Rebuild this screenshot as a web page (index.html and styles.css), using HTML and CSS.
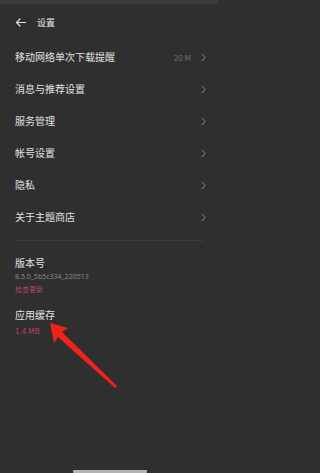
FILE: index.html
```html
<!DOCTYPE html>
<html lang="zh">
<head>
<meta charset="utf-8">
<link rel="stylesheet" href="styles.css">
</head>
<body>
<div class="screen">
  <div class="topstrip"></div>
  <header class="header">
    <svg class="back" width="11" height="9" viewBox="0 0 11 9"><path d="M5 1 L1.5 4.5 L5 8 M1.5 4.5 H10.5" fill="none" stroke="#e0e0e0" stroke-width="1.2" stroke-linecap="round" stroke-linejoin="round"/></svg>
    <span class="title">设置</span>
  </header>
  <ul class="list">
    <li class="row"><span class="label">移动网络单次下载提醒</span><span class="value">20 M</span><svg class="chev" width="5" height="9" viewBox="0 0 5 9"><path d="M0.8 0.8 L4.2 4.5 L0.8 8.2" fill="none" stroke="#8a8a8a" stroke-width="1"/></svg></li>
    <li class="row"><span class="label">消息与推荐设置</span><svg class="chev" width="5" height="9" viewBox="0 0 5 9"><path d="M0.8 0.8 L4.2 4.5 L0.8 8.2" fill="none" stroke="#8a8a8a" stroke-width="1"/></svg></li>
    <li class="row"><span class="label">服务管理</span><svg class="chev" width="5" height="9" viewBox="0 0 5 9"><path d="M0.8 0.8 L4.2 4.5 L0.8 8.2" fill="none" stroke="#8a8a8a" stroke-width="1"/></svg></li>
    <li class="row"><span class="label">帐号设置</span><svg class="chev" width="5" height="9" viewBox="0 0 5 9"><path d="M0.8 0.8 L4.2 4.5 L0.8 8.2" fill="none" stroke="#8a8a8a" stroke-width="1"/></svg></li>
    <li class="row"><span class="label">隐私</span><svg class="chev" width="5" height="9" viewBox="0 0 5 9"><path d="M0.8 0.8 L4.2 4.5 L0.8 8.2" fill="none" stroke="#8a8a8a" stroke-width="1"/></svg></li>
    <li class="row"><span class="label">关于主题商店</span><svg class="chev" width="5" height="9" viewBox="0 0 5 9"><path d="M0.8 0.8 L4.2 4.5 L0.8 8.2" fill="none" stroke="#8a8a8a" stroke-width="1"/></svg></li>
  </ul>
  <div class="divider"></div>
  <section class="info">
    <div class="info-title">版本号</div>
    <div class="info-sub">8.5.0_5b5c334_220513</div>
    <div class="info-link">检查更新</div>
  </section>
  <section class="info cache">
    <div class="info-title">应用缓存</div>
    <div class="info-link">1.4 MB</div>
  </section>
  <svg class="arrow" width="80" height="75" viewBox="0 0 80 75">
    <path d="M3 2 L21 7 L15 11 L70 65 L68 67 L11 16 L7 22 Z" fill="#f0231a"/>
  </svg>
  <div class="home-bar"></div>
</div>
</body>
</html>
```
FILE: styles.css
```css
* { margin: 0; padding: 0; box-sizing: border-box; }
html, body { background: #2f2f2f; }
body { font-family: "Noto Sans CJK SC", "Noto Sans", sans-serif; color: #e4e4e4; }
.screen { position: relative; width: 218px; height: 473px; overflow: hidden; background: #2f2f2f; }
.topstrip { height: 4px; background: #3c3c3c; }
.header { display: flex; align-items: center; height: 37px; padding-left: 15px; }
.back { display: block; }
.title { margin-left: 11px; font-size: 9px; line-height: 1; color: #e8e8e8; }
.list { list-style: none; }
.row { display: flex; align-items: center; height: 32px; padding: 0 12px 0 15px; }
.label { flex: 1; font-size: 10px; line-height: 1; color: #e2e2e2; }
.value { font-size: 8px; color: #6f6f6f; margin-right: 10px; }
.chev { display: block; }
.divider { height: 1px; background: #3b3b3b; margin: 7px 14px 0 15px; }
.info { padding-left: 15px; }
.info-title { font-size: 10px; line-height: 12px; color: #e2e2e2; margin-top: 16px; }
.info-sub { font-size: 7px; line-height: 9px; color: #8a8a8a; margin-top: 3px; font-family: "Noto Sans", sans-serif; }
.info-link { font-size: 7px; line-height: 9px; color: #b8455e; margin-top: 4px; }
.cache .info-title { margin-top: 15px; }
.cache .info-link { font-size: 8px; margin-top: 5px; }
.arrow { position: absolute; left: 47px; top: 321px; }
.home-bar { position: absolute; left: 73px; bottom: 0; width: 74px; height: 3px; background: #b4b4b4; border-radius: 1px; }
```
